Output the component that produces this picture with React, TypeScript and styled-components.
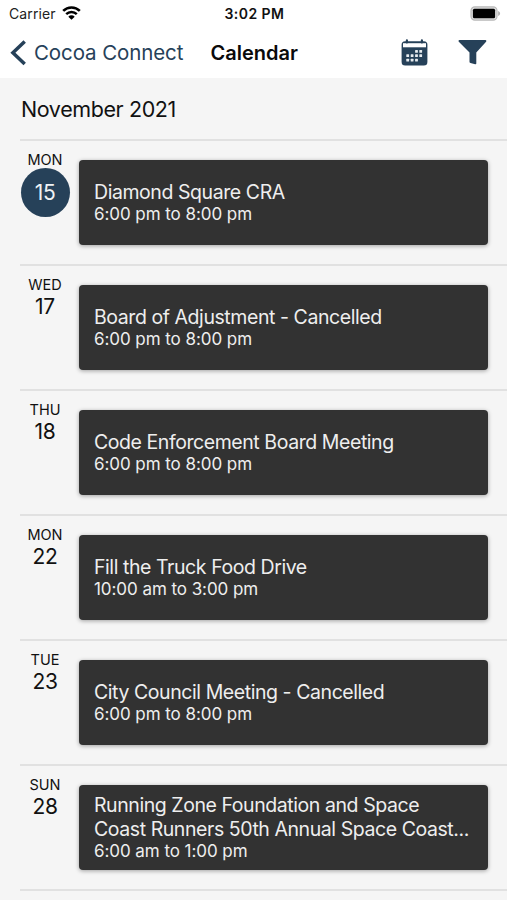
import React from "react";
import styled, { createGlobalStyle } from "styled-components";

const NAVY = "#264159";

const GlobalStyle = createGlobalStyle`
  *, *::before, *::after { box-sizing: border-box; }
  body {
    margin: 0;
    overflow: hidden;
    background: #f5f5f5;
    font-family: Inter, "Liberation Sans", sans-serif;
    color: #111;
  }
`;

const Screen = styled.div`
  width: 507px;
  height: 900px;
  display: flex;
  flex-direction: column;
  overflow: hidden;
  background: #f5f5f5;
`;

const Header = styled.header`
  height: 78px;
  background: #fff;
`;

const StatusBar = styled.div`
  height: 27px;
  padding: 0 6px 0 9px;
  display: grid;
  grid-template-columns: 1fr auto 1fr;
  align-items: center;
`;

const Carrier = styled.div`
  display: flex;
  align-items: center;
  gap: 6px;
  font-size: 14px;
  line-height: 27px;
  letter-spacing: 0.1px;
  color: #222;

  svg {
    margin-top: -2px;
  }
`;

const Clock = styled.div`
  font-size: 14px;
  line-height: 27px;
  font-weight: 600;
  letter-spacing: 0.45px;
  margin-left: -1px;
  color: #111;
`;

const BatterySlot = styled.div`
  display: flex;
  justify-content: flex-end;
`;

const NavBar = styled.nav`
  height: 51px;
  padding: 0 20px 0 9px;
  display: grid;
  grid-template-columns: 201.5px 1fr auto;
  align-items: center;
`;

const BackButton = styled.button`
  display: flex;
  align-items: center;
  gap: 8px;
  padding: 0;
  border: 0;
  background: none;
  font: inherit;
  font-size: 20.5px;
  line-height: 26px;
  letter-spacing: -0.1px;
  color: ${NAVY};
  white-space: nowrap;
`;

const Title = styled.h1`
  margin: 0;
  font-size: 20px;
  line-height: 26px;
  font-weight: 600;
  color: #0a0a0a;
`;

const Actions = styled.div`
  display: flex;
  align-items: center;
  gap: 30.5px;
  margin-top: -1px;
`;

const IconButton = styled.button`
  display: block;
  padding: 0;
  border: 0;
  background: none;
  line-height: 0;
`;

const Month = styled.h2`
  margin: 0;
  height: 61px;
  padding-left: 21px;
  font-size: 21.5px;
  line-height: 62px;
  font-weight: 400;
  letter-spacing: -0.4px;
`;

const Days = styled.ul`
  list-style: none;
  margin: 0;
  padding: 0 0 0 20px;
`;

const Day = styled.li`
  height: 125px;
  padding: 18.6px 19px 0 0;
  display: grid;
  grid-template-columns: 50px minmax(0, 1fr);
  column-gap: 9px;
  border-top: 2px solid #e1e1e1;
`;

const DateColumn = styled.div`
  display: flex;
  flex-direction: column;
  align-items: center;
  margin-top: -9.1px;
`;

const Weekday = styled.div`
  font-size: 14.5px;
  line-height: 17px;
`;

const DayNumber = styled.div<{ $today?: boolean }>`
  width: 49px;
  height: 49px;
  border-radius: 50%;
  font-size: 21px;
  line-height: ${(p) => (p.$today ? 49 : 28)}px;
  letter-spacing: -0.3px;
  text-align: center;
  color: ${(p) => (p.$today ? "#eef2f5" : "#111")};
  background: ${(p) => (p.$today ? NAVY : "transparent")};
`;

const Card = styled.article`
  height: 85.400px;
  padding: 0 0 0 15px;
  display: flex;
  flex-direction: column;
  justify-content: center;
  border-radius: 4px;
  background: #323232;
  color: #eee;
  box-shadow: 0 1px 4px rgba(0, 0, 0, 0.35);
`;

const EventTitle = styled.div`
  font-size: 19.5px;
  line-height: 24px;
  letter-spacing: -0.43px;
  white-space: pre;
`;

const EventTime = styled.div`
  font-size: 17px;
  line-height: 21px;
  letter-spacing: -0.06px;
  white-space: nowrap;
`;

const Bottom = styled.div`
  margin-left: 20px;
  height: 2px;
  background: #e1e1e1;
`;

interface CalendarEvent {
  weekday: string;
  day: number;
  title: string;
  time: string;
  today?: boolean;
}

const events: CalendarEvent[] = [
  { weekday: "MON", day: 15, title: "Diamond Square CRA", time: "6:00 pm to 8:00 pm", today: true },
  { weekday: "WED", day: 17, title: "Board of Adjustment - Cancelled", time: "6:00 pm to 8:00 pm" },
  { weekday: "THU", day: 18, title: "Code Enforcement Board Meeting", time: "6:00 pm to 8:00 pm" },
  { weekday: "MON", day: 22, title: "Fill the Truck Food Drive", time: "10:00 am to 3:00 pm" },
  { weekday: "TUE", day: 23, title: "City Council Meeting - Cancelled", time: "6:00 pm to 8:00 pm" },
  {
    weekday: "SUN",
    day: 28,
    title: "Running Zone Foundation and Space\nCoast Runners 50th Annual Space Coast...",
    time: "6:00 am to 1:00 pm",
  },
];

const WifiIcon = () => (
  <svg width="19" height="14" viewBox="0 0 19 14" fill="none" stroke="#000">
    <path d="M1.2 4.9a11.7 11.7 0 0 1 16.6 0" strokeWidth="2.6" />
    <path d="M4.2 8.2a7.5 7.5 0 0 1 10.6 0" strokeWidth="2.4" />
    <path d="M9.5 13.8 6.3 10.7a4.5 4.5 0 0 1 6.4 0Z" fill="#000" stroke="none" />
  </svg>
);

const BatteryIcon = () => (
  <svg width="31" height="15" viewBox="0 0 31 15">
    <rect x="1" y="0.9" width="26" height="13.2" rx="3.8" fill="#ddd" stroke="#b8b8b8" strokeWidth="1.2" />
    <rect x="2.9" y="2.8" width="22.2" height="9.4" rx="1.5" fill="#000" />
    <path d="M28.1 5v5c1.3-.5 2-1.4 2-2.5S29.4 5.5 28.1 5Z" fill="#b0b0b0" />
  </svg>
);

const ChevronIcon = () => (
  <svg width="17" height="26" viewBox="0 0 17 26" fill="none" stroke={NAVY} strokeWidth="3.5">
    <path d="M15.7 1.4 3.9 12.7l11.800 11.300" />
  </svg>
);

const calendarDots = [
  [15.3, 11.2], [19.5, 11.2],
  [6.5, 15.5], [10.9, 15.5], [15.3, 15.5], [19.5, 15.5],
  [6.5, 19.9], [10.9, 19.9], [15.3, 19.9],
];

const CalendarIcon = () => (
  <svg width="27" height="27" viewBox="0 0 27 27">
    <rect x="0.6" y="2.2" width="25.8" height="24.3" rx="3.5" fill={NAVY} />
    <path d="M2 4.2h23v4.1H2Z" fill="#fff" />
    <path d="M5.9 1.4v2M20.9 1.4v2" stroke={NAVY} strokeWidth="2.2" strokeLinecap="round" />
    {calendarDots.map(([x, y]) => (
      <rect key={`${x}-${y}`} x={x - 1.2} y={y - 0.2} width="2.8" height="2.8" rx="0.5" fill="#e7ecf0" />
    ))}
  </svg>
);

const FilterIcon = () => (
  <svg width="29" height="26" viewBox="0 0 29 26" fill={NAVY}>
    <path d="M1.4 1h26.1c.8 0 1.1 1 .6 1.7L18.3 13.500v11c0 .7-.5.9-1.2.7l-4.600-1.300c-.7-.2-1-.5-1-1.200v-9.200L.8 2.700C.3 2 .6 1 1.400 1Z" />
  </svg>
);

export default function App() {
  return (
    <Screen>
      <GlobalStyle />
      <Header>
        <StatusBar>
          <Carrier>
            <span>Carrier</span>
            <WifiIcon />
          </Carrier>
          <Clock>3:02 PM</Clock>
          <BatterySlot>
            <BatteryIcon />
          </BatterySlot>
        </StatusBar>
        <NavBar>
          <BackButton>
            <ChevronIcon />
            <span>Cocoa Connect</span>
          </BackButton>
          <Title>Calendar</Title>
          <Actions>
            <IconButton aria-label="Month view">
              <CalendarIcon />
            </IconButton>
            <IconButton aria-label="Filter">
              <FilterIcon />
            </IconButton>
          </Actions>
        </NavBar>
      </Header>
      <Month>November 2021</Month>
      <Days>
        {events.map((event) => (
          <Day key={event.day}>
            <DateColumn>
              <Weekday>{event.weekday}</Weekday>
              <DayNumber $today={event.today}>{event.day}</DayNumber>
            </DateColumn>
            <Card>
              <EventTitle>{event.title}</EventTitle>
              <EventTime>{event.time}</EventTime>
            </Card>
          </Day>
        ))}
      </Days>
      <Bottom />
    </Screen>
  );
}
